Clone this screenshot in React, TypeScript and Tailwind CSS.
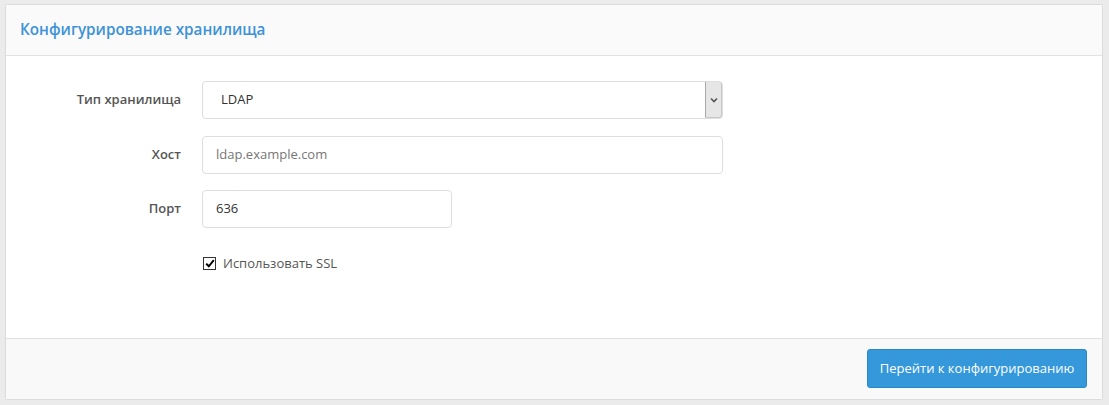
import React from "react";

export default function App() {
  const font = { fontFamily: '"Open Sans", "Noto Sans", sans-serif' };
  return (
    <div className="w-[1109px] h-[405px] bg-[#ebebeb] pt-[4px] pl-[5px] pr-[6px] pb-[5px]" style={font}>
      <div className="h-[396px] bg-white border border-[#dcdcdc] rounded-[2px] flex flex-col">
        <div className="h-[51px] bg-[#fafafa] border-b border-[#e2e2e2] flex items-center pl-[14px] shrink-0">
          <h1 className="text-[15.25px] font-semibold text-[#3d92d8] leading-none">Конфигурирование хранилища</h1>
        </div>
        <div className="flex-1 pt-[25px] flex flex-col">
          <div className="flex items-center h-[38px]">
            <label className="w-[175px] text-right text-[13px] font-semibold text-[#555]">Тип хранилища</label>
            <div className="ml-[21px] w-[521px] h-[38px] border border-[#dedede] rounded-[4px] flex items-center relative bg-white">
              <span className="pl-[18px] text-[13px] text-[#333]">LDAP</span>
              <div className="absolute right-[0px] top-[0px] bottom-[0px] w-[17px] bg-[#e6e6e6] border-l border-[#a9a9a9] border-r border-r-[#c8c8c8] border-b border-b-[#c8c8c8] rounded-r-[3px] flex items-center justify-center">
                <svg width="8" height="6" viewBox="0 0 8 6">
                  <path d="M1 1.5 L4 4.5 L7 1.5" stroke="#555" strokeWidth="1.6" fill="none" />
                </svg>
              </div>
            </div>
          </div>
          <div className="flex items-center h-[38px] mt-[17px]">
            <label className="w-[175px] text-right text-[13px] font-semibold text-[#555]">Хост</label>
            <div className="ml-[21px] w-[521px] h-[38px] border border-[#dedede] rounded-[4px] flex items-center bg-white">
              <span className="pl-[13px] text-[13px] text-[#777]">ldap.example.com</span>
            </div>
          </div>
          <div className="flex items-center h-[38px] mt-[16px]">
            <label className="w-[175px] text-right text-[13px] font-semibold text-[#555]">Порт</label>
            <div className="ml-[21px] w-[250px] h-[38px] border border-[#dedede] rounded-[4px] flex items-center bg-white">
              <span className="pl-[13px] text-[13px] text-[#333]">636</span>
            </div>
          </div>
          <div className="flex items-center mt-[26px] ml-[197px]">
            <div className="w-[13px] h-[13px] border border-[#333] bg-white flex items-center justify-center">
              <svg width="10" height="9" viewBox="0 0 10 9">
                <path d="M1.2 4.6 L3.8 7.3 L8.8 1.2" stroke="#000" strokeWidth="2" fill="none" />
              </svg>
            </div>
            <span className="ml-[7px] text-[13px] text-[#555]">Использовать SSL</span>
          </div>
        </div>
        <div className="h-[61px] bg-[#f9f9f9] border-t border-[#dedede] flex items-start justify-end pr-[15px] pt-[10px] shrink-0">
          <button className="h-[39px] w-[220px] bg-[#3498db] border border-[#2a88c8] rounded-[3px] text-white text-[13px]">
            Перейти к конфигурированию
          </button>
        </div>
      </div>
    </div>
  );
}
